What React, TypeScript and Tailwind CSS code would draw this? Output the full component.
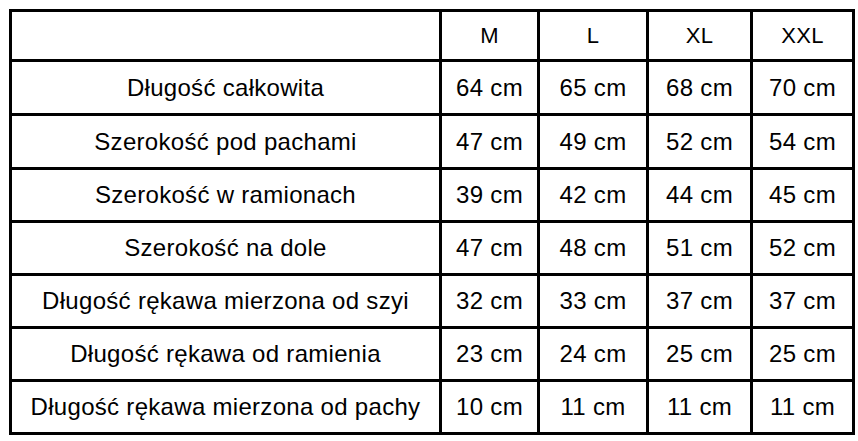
import React from "react";

const sizes = ["M", "L", "XL", "XXL"];

const rows: { label: string; values: string[] }[] = [
  { label: "Długość całkowita", values: ["64 cm", "65 cm", "68 cm", "70 cm"] },
  { label: "Szerokość pod pachami", values: ["47 cm", "49 cm", "52 cm", "54 cm"] },
  { label: "Szerokość w ramionach", values: ["39 cm", "42 cm", "44 cm", "45 cm"] },
  { label: "Szerokość na dole", values: ["47 cm", "48 cm", "51 cm", "52 cm"] },
  { label: "Długość rękawa mierzona od szyi", values: ["32 cm", "33 cm", "37 cm", "37 cm"] },
  { label: "Długość rękawa od ramienia", values: ["23 cm", "24 cm", "25 cm", "25 cm"] },
  { label: "Długość rękawa mierzona od pachy", values: ["10 cm", "11 cm", "11 cm", "11 cm"] },
];

const cell =
  "bg-white flex items-center justify-center text-black whitespace-nowrap";

export default function App() {
  return (
    <div className="w-[858px] h-[441px] bg-white pt-[9px] pl-[9px] font-['Liberation_Sans',Arial,sans-serif] text-[24px] tracking-[0.3px]">
      <div className="inline-grid grid-cols-[427px_95px_106px_101px_99px] grid-rows-[47px_51px_51px_50px_50px_50px_50px_50px] gap-[3px] p-[3px] bg-black">
        {/* header */}
        <div className={cell}></div>
        {sizes.map((s) => (
          <div key={s} className={`${cell} text-[22px]`}>
            {s}
          </div>
        ))}

        {rows.map((r) => (
          <React.Fragment key={r.label}>
            <div className={cell}>{r.label}</div>
            {r.values.map((v, i) => (
              <div key={i} className={cell}>
                {v}
              </div>
            ))}
          </React.Fragment>
        ))}
      </div>
    </div>
  );
}
